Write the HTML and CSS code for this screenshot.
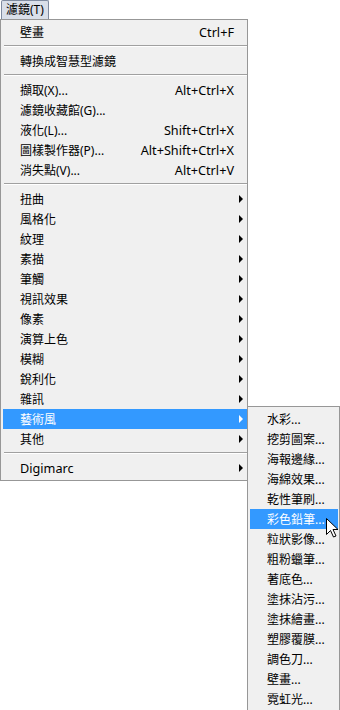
FILE: index.html
```html
<!DOCTYPE html>
<html lang="zh-Hant">
<head>
    <meta charset="UTF-8">
    <meta name="viewport" content="width=device-width, initial-scale=1.0">
    <title>濾鏡選單</title>
    <link rel="stylesheet" href="styles.css">
</head>
<body>
    <div class="menubar">
        <span class="menubar-item">濾鏡(T)</span>
    </div>

    <div class="menu main-menu">
        <div class="item"><span>壁畫</span><span class="shortcut">Ctrl+F</span></div>
        <div class="sep"></div>
        <div class="item"><span>轉換成智慧型濾鏡</span></div>
        <div class="sep"></div>
        <div class="item"><span>擷取(X)...</span><span class="shortcut">Alt+Ctrl+X</span></div>
        <div class="item"><span>濾鏡收藏館(G)...</span></div>
        <div class="item"><span>液化(L)...</span><span class="shortcut">Shift+Ctrl+X</span></div>
        <div class="item"><span>圖樣製作器(P)...</span><span class="shortcut">Alt+Shift+Ctrl+X</span></div>
        <div class="item"><span>消失點(V)...</span><span class="shortcut">Alt+Ctrl+V</span></div>
        <div class="sep"></div>
        <div class="item sub"><span>扭曲</span><span class="arrow"></span></div>
        <div class="item sub"><span>風格化</span><span class="arrow"></span></div>
        <div class="item sub"><span>紋理</span><span class="arrow"></span></div>
        <div class="item sub"><span>素描</span><span class="arrow"></span></div>
        <div class="item sub"><span>筆觸</span><span class="arrow"></span></div>
        <div class="item sub"><span>視訊效果</span><span class="arrow"></span></div>
        <div class="item sub"><span>像素</span><span class="arrow"></span></div>
        <div class="item sub"><span>演算上色</span><span class="arrow"></span></div>
        <div class="item sub"><span>模糊</span><span class="arrow"></span></div>
        <div class="item sub"><span>銳利化</span><span class="arrow"></span></div>
        <div class="item sub"><span>雜訊</span><span class="arrow"></span></div>
        <div class="item sub active"><span>藝術風</span><span class="arrow"></span></div>
        <div class="item sub"><span>其他</span><span class="arrow"></span></div>
        <div class="sep"></div>
        <div class="item sub"><span class="latin">Digimarc</span><span class="arrow"></span></div>
    </div>

    <!-- submenu for 藝術風 -->
    <div class="menu submenu">
        <div class="item"><span>水彩...</span></div>
        <div class="item"><span>挖剪圖案...</span></div>
        <div class="item"><span>海報邊緣...</span></div>
        <div class="item"><span>海綿效果...</span></div>
        <div class="item"><span>乾性筆刷...</span></div>
        <div class="item active"><span>彩色鉛筆...</span></div>
        <div class="item"><span>粒狀影像...</span></div>
        <div class="item"><span>粗粉蠟筆...</span></div>
        <div class="item"><span>著底色...</span></div>
        <div class="item"><span>塗抹沾污...</span></div>
        <div class="item"><span>塗抹繪畫...</span></div>
        <div class="item"><span>塑膠覆膜...</span></div>
        <div class="item"><span>調色刀...</span></div>
        <div class="item"><span>壁畫...</span></div>
        <div class="item"><span>霓虹光...</span></div>
    </div>

    <svg class="cursor" width="13" height="20" viewBox="0 0 13 20">
        <path d="M0.5 0.5 L0.5 16.5 L4.5 12.5 L7.5 19 L10 18 L7 11.5 L12 11.5 Z" fill="#fff" stroke="#000" stroke-width="1" stroke-linejoin="miter"/>
    </svg>
</body>
</html>
```

FILE: styles.css
```css
body {
    margin: 0;
    background: #fff;
    font-family: "Noto Sans", "Noto Sans CJK TC", sans-serif;
    font-size: 12px;
    color: #000;
    position: relative;
    height: 710px;
    overflow: hidden;
}
.menubar {
    height: 19px;
}
.menubar-item {
    display: inline-block;
    box-sizing: border-box;
    height: 19px;
    margin-left: 1px;
    padding: 0 4px;
    line-height: 17px;
    background: #d9dfe9;
    border: 1px solid #7f8ba0;
    border-bottom: none;
    border-radius: 2px 2px 0 0;
}
.menu {
    box-sizing: border-box;
    background: #f0f0f0;
    border: 1px solid #979797;
}
.main-menu {
    width: 248px;
    padding: 2px 0 2px 2px;
}
.item {
    display: flex;
    align-items: center;
    justify-content: space-between;
    height: 20px;
    padding: 0 13px 0 17px;
    white-space: nowrap;
}
.item.sub {
    padding-right: 4px;
}
.item.active {
    background: #3399ff;
    color: #fff;
}
.shortcut,
.latin {
    font-size: 12.7px;
}
.arrow {
    width: 0;
    height: 0;
    border-top: 4px solid transparent;
    border-bottom: 4px solid transparent;
    border-left: 4px solid #000;
}
.active .arrow {
    border-left-color: #fff;
}
.sep {
    height: 1px;
    margin: 3px 0 4px 1px;
    background: #a0a0a0;
    border-bottom: 1px solid #fff;
}
.submenu {
    position: absolute;
    left: 247px;
    top: 406px;
    width: 93px;
    padding: 2px 1px 2px 2px;
}
.submenu .item {
    padding-right: 4px;
}
.cursor {
    position: absolute;
    left: 326px;
    top: 518px;
}
```
